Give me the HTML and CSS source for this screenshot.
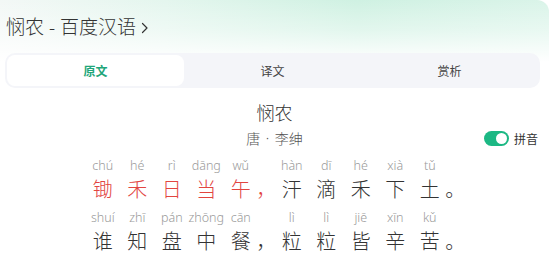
FILE: index.html
```
<!DOCTYPE html>
<html lang="zh-CN">
<head>
    <meta charset="UTF-8">
    <meta name="viewport" content="width=device-width, initial-scale=1.0">
    <title>悯农 - 百度汉语</title>
    <link rel="stylesheet" href="styles.css">
</head>
<body>

    <div class="card">
        <div class="header">
            <span class="site-title">悯农 - 百度汉语</span>
            <svg class="chevron" width="8" height="12" viewBox="0 0 8 12"><path d="M1.5 1.5 L6 6 L1.5 10.5" fill="none" stroke="#333" stroke-width="1.2" stroke-linecap="round" stroke-linejoin="round"/></svg>
        </div>

        <div class="tabs">
            <div class="tab active">原文</div>
            <div class="tab">译文</div>
            <div class="tab">赏析</div>
        </div>

        <h1 class="poem-title">悯农</h1>
        <div class="author-row">
            <div></div>
            <div class="author">唐 · 李绅</div>
            <div class="pinyin-switch">
                <span class="toggle"><span class="knob"></span></span>
                <span>拼音</span>
            </div>
        </div>

        <div class="poem">
            <div class="line">
                <div class="cell red"><span class="py">chú</span><span class="hz">锄</span></div>
                <div class="cell red"><span class="py">hé</span><span class="hz">禾</span></div>
                <div class="cell red"><span class="py">rì</span><span class="hz">日</span></div>
                <div class="cell red"><span class="py">dāng</span><span class="hz">当</span></div>
                <div class="cell red"><span class="py">wǔ</span><span class="hz">午</span></div>
                <div class="cell punct red"><span class="py"></span><span class="hz">，</span></div>
                <div class="cell"><span class="py">hàn</span><span class="hz">汗</span></div>
                <div class="cell"><span class="py">dī</span><span class="hz">滴</span></div>
                <div class="cell"><span class="py">hé</span><span class="hz">禾</span></div>
                <div class="cell"><span class="py">xià</span><span class="hz">下</span></div>
                <div class="cell"><span class="py">tǔ</span><span class="hz">土</span></div>
                <div class="cell punct"><span class="py"></span><span class="hz">。</span></div>
            </div>
            <div class="line">
                <div class="cell"><span class="py">shuí</span><span class="hz">谁</span></div>
                <div class="cell"><span class="py">zhī</span><span class="hz">知</span></div>
                <div class="cell"><span class="py">pán</span><span class="hz">盘</span></div>
                <div class="cell"><span class="py">zhōng</span><span class="hz">中</span></div>
                <div class="cell"><span class="py">cān</span><span class="hz">餐</span></div>
                <div class="cell punct"><span class="py"></span><span class="hz">，</span></div>
                <div class="cell"><span class="py">lì</span><span class="hz">粒</span></div>
                <div class="cell"><span class="py">lì</span><span class="hz">粒</span></div>
                <div class="cell"><span class="py">jiē</span><span class="hz">皆</span></div>
                <div class="cell"><span class="py">xīn</span><span class="hz">辛</span></div>
                <div class="cell"><span class="py">kǔ</span><span class="hz">苦</span></div>
                <div class="cell punct"><span class="py"></span><span class="hz">。</span></div>
            </div>
        </div>
    </div>

</body>
</html>
```

FILE: styles.css
```
body {
    margin: 0;
    background-color: #fff;
    font-family: "Noto Sans CJK SC", "Noto Sans", sans-serif;
    color: #333;
}
.card {
    width: 549px;
    height: 269px;
    overflow: hidden;
    border-radius: 0 12px 12px 0;
    background:
        linear-gradient(to bottom, rgba(255,255,255,0) 0, rgba(255,255,255,0.4) 30px, #fff 62px),
        linear-gradient(90deg, #f3f8f6 0, #e4f6ee 30%, #cff1e2 65%, #daf4e9 100%);
}
.header {
    display: flex;
    align-items: center;
    gap: 5px;
    padding: 15px 0 0 6px;
    height: 24px;
}
.site-title {
    font-family: "Noto Sans", "Noto Sans CJK SC", sans-serif;
    font-size: 19px;
    font-weight: 300;
    line-height: 24px;
    color: #333;
}
.chevron {
    margin-top: 1px;
}
.tabs {
    display: flex;
    margin: 14px 0 0 5px;
    width: 531px;
    height: 31px;
    padding: 2px;
    border-radius: 10px;
    background-color: #f4f5f9;
}
.tab {
    flex: 1;
    display: flex;
    align-items: center;
    justify-content: center;
    font-size: 12px;
    color: #444;
    border-radius: 8px;
}
.tab.active {
    background-color: #fff;
    color: #1fa67a;
    font-weight: bold;
}
.poem-title {
    margin: 12px 0 0;
    text-align: center;
    font-size: 18px;
    font-weight: 300;
    line-height: 24px;
    color: #333;
}
.author-row {
    display: grid;
    grid-template-columns: 1fr auto 1fr;
    align-items: center;
    margin-top: 4px;
    height: 20px;
}
.author {
    font-family: "Noto Sans", "Noto Sans CJK SC", sans-serif;
    font-size: 14px;
    font-weight: 300;
    word-spacing: 2px;
    color: #555;
}
.pinyin-switch {
    justify-self: end;
    display: flex;
    align-items: center;
    gap: 5px;
    margin-right: 11px;
    font-size: 12px;
    color: #333;
}
.toggle {
    position: relative;
    width: 25px;
    height: 15px;
    border-radius: 8px;
    background-color: #1cb884;
}
.knob {
    position: absolute;
    right: 2px;
    top: 2px;
    width: 11px;
    height: 11px;
    border-radius: 50%;
    background-color: #fff;
}
.poem {
    margin-top: 11px;
}
.line {
    display: flex;
    justify-content: center;
    gap: 14.5px;
    margin-bottom: 10px;
}
.cell {
    display: flex;
    flex-direction: column;
    align-items: center;
    width: 20px;
    color: #333;
}
.cell.punct {
    margin: 0 -9px;
    align-items: flex-start;
}
.py {
    font-family: "Noto Sans", sans-serif;
    font-size: 12.5px;
    font-weight: 300;
    line-height: 14px;
    height: 14px;
    color: #9a9a9a;
    white-space: nowrap;
}
.hz {
    font-size: 20px;
    font-weight: 300;
    line-height: 24px;
    margin-top: 4px;
}
.red .hz {
    color: #e2453f;
}
```
